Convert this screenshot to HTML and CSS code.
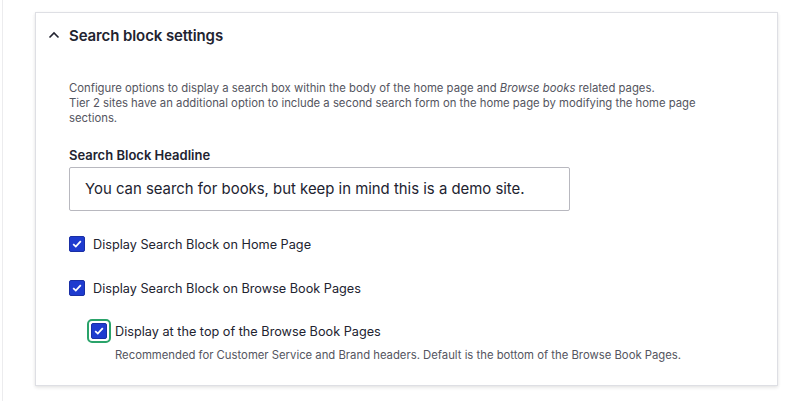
FILE: index.html
```html
<!DOCTYPE html>
<html lang="en">
<head>
<meta charset="utf-8">
<link rel="stylesheet" href="styles.css">
</head>
<body>
<div class="page">
  <div class="card">
    <div class="summary">
      <svg class="chev" width="12" height="8" viewBox="0 0 12 8"><path d="M1.5 6.5 L6 2 L10.5 6.5" fill="none" stroke="#222330" stroke-width="1.6"/></svg>
      <span class="title">Search block settings</span>
    </div>
    <div class="content">
      <p class="desc">Configure options to display a search box within the body of the home page and <em>Browse books</em> related pages.<br>Tier 2 sites have an additional option to include a second search form on the home page by modifying the home page sections.</p>
      <div class="field">
        <label class="label">Search Block Headline</label>
        <div class="input">You can search for books, but keep in mind this is a demo site.</div>
      </div>
      <div class="check">
        <span class="box"><svg width="10" height="8" viewBox="0 0 10 8"><path d="M1.2 4.2 L3.8 6.6 L8.8 1.2" fill="none" stroke="#fff" stroke-width="1.8"/></svg></span>
        <span class="clabel">Display Search Block on Home Page</span>
      </div>
      <div class="check">
        <span class="box"><svg width="10" height="8" viewBox="0 0 10 8"><path d="M1.2 4.2 L3.8 6.6 L8.8 1.2" fill="none" stroke="#fff" stroke-width="1.8"/></svg></span>
        <span class="clabel">Display Search Block on Browse Book Pages</span>
      </div>
      <div class="sub">
        <div class="check nested">
          <span class="focus"><span class="box"><svg width="10" height="8" viewBox="0 0 10 8"><path d="M1.2 4.2 L3.8 6.6 L8.8 1.2" fill="none" stroke="#fff" stroke-width="1.8"/></svg></span></span>
          <span class="clabel">Display at the top of the Browse Book Pages</span>
        </div>
        <p class="subdesc">Recommended for Customer Service and Brand headers. Default is the bottom of the Browse Book Pages.</p>
      </div>
    </div>
  </div>
</div>
</body>
</html>
```
FILE: styles.css
```css
html, body {
  margin: 0;
  padding: 0;
  background: #fff;
}
body {
  font-family: Inter, "Noto Sans", sans-serif;
  color: #222330;
}
.page {
  margin-left: 2px;
  border-left: 1px solid #ececee;
  height: 401px;
  padding-left: 32px;
  padding-top: 12px;
  box-sizing: border-box;
}
.card {
  width: 743px;
  height: 374px;
  box-sizing: border-box;
  border: 1px solid #dedfe4;
  box-shadow: 0 1px 3px rgba(0,0,0,0.08), 0 2px 4px rgba(0,0,0,0.05);
  background: #fff;
}
.summary {
  display: flex;
  align-items: center;
  height: 44px;
  padding-left: 12px;
}
.chev {
  margin-right: 9px;
}
.title {
  font-size: 15px;
  font-weight: 600;
  letter-spacing: -0.1px;
}
.content {
  padding: 0 0 0 33px;
}
.desc {
  margin: 24px 0 0 0;
  font-size: 11.3px;
  line-height: 15px;
  color: #545560;
  max-width: 645px;
}
.field {
  margin-top: 21px;
}
.label {
  display: block;
  font-size: 13px;
  font-weight: 600;
  line-height: 16px;
}
.input {
  margin-top: 4px;
  width: 501px;
  height: 44px;
  box-sizing: border-box;
  border: 1px solid #b8b8bf;
  border-radius: 2px;
  padding-left: 15px;
  display: flex;
  align-items: center;
  font-size: 14.9px;
  color: #222330;
}
.check {
  display: flex;
  align-items: center;
  height: 18px;
  margin-top: 24px;
}
.check + .check {
  margin-top: 26px;
}
.box {
  width: 16px;
  height: 16px;
  box-sizing: border-box;
  background: #1e3bcf;
  border: 1px solid #1a2fa5;
  border-radius: 2px;
  display: flex;
  align-items: center;
  justify-content: center;
  margin-right: 8px;
}
.clabel {
  font-size: 12.7px;
  color: #222330;
}
.sub {
  padding-left: 22px;
  margin-top: 22px;
}
.check.nested {
  margin-top: 0;
  height: 24px;
}
.focus {
  width: 24px;
  height: 24px;
  box-sizing: border-box;
  border: 2px solid #2aa36a;
  border-radius: 5px;
  display: flex;
  align-items: center;
  justify-content: center;
  margin-left: -4px;
  margin-right: 4px;
  background: #fff;
}
.focus .box {
  margin-right: 0;
  width: 16px;
  height: 16px;
}
.subdesc {
  margin: 5px 0 0 24px;
  font-size: 11.3px;
  line-height: 15px;
  color: #545560;
}
```
